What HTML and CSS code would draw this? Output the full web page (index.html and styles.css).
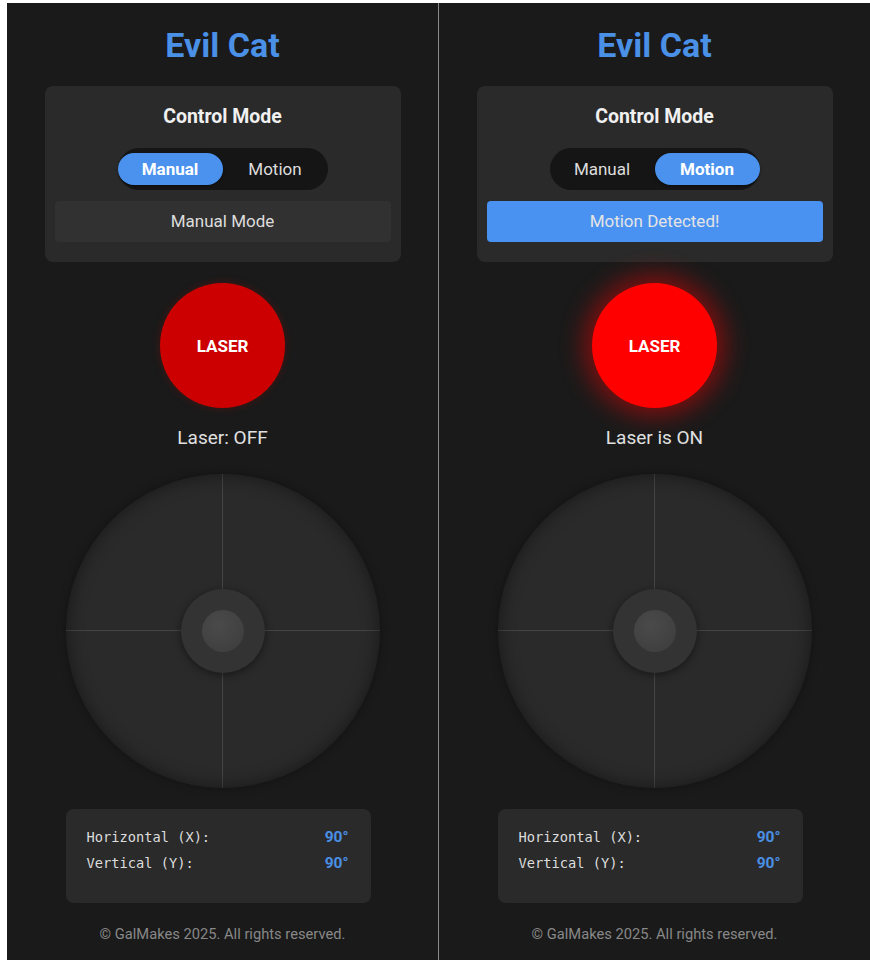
FILE: index.html
```html
<!DOCTYPE html>
<html lang="en">
<head>
  <meta charset="UTF-8">
  <meta name="viewport" content="width=device-width, initial-scale=1">
  <title>Evil Cat</title>
  <link rel="stylesheet" href="styles.css">
</head>
<body>
  <div class="frames">

    <!-- Manual mode, laser off -->
    <div class="panel">
      <h1 class="title">Evil Cat</h1>

      <div class="card">
        <h2 class="card-title">Control Mode</h2>
        <div class="toggle">
          <button class="toggle-btn active">Manual</button>
          <button class="toggle-btn">Motion</button>
        </div>
        <div class="status">Manual Mode</div>
      </div>

      <button class="laser">LASER</button>
      <p class="laser-state">Laser: OFF</p>

      <div class="joystick">
        <div class="knob"><div class="knob-cap"></div></div>
      </div>

      <div class="readout">
        <div class="readout-row"><span class="readout-label">Horizontal (X):</span><span class="readout-value">90°</span></div>
        <div class="readout-row"><span class="readout-label">Vertical (Y):</span><span class="readout-value">90°</span></div>
      </div>

      <footer class="footer">© GalMakes 2025. All rights reserved.</footer>
    </div>

    <div class="divider"></div>

    <!-- Motion mode, laser on -->
    <div class="panel">
      <h1 class="title">Evil Cat</h1>

      <div class="card">
        <h2 class="card-title">Control Mode</h2>
        <div class="toggle">
          <button class="toggle-btn">Manual</button>
          <button class="toggle-btn active">Motion</button>
        </div>
        <div class="status detected">Motion Detected!</div>
      </div>

      <button class="laser on">LASER</button>
      <p class="laser-state">Laser is ON</p>

      <div class="joystick">
        <div class="knob"><div class="knob-cap"></div></div>
      </div>

      <div class="readout">
        <div class="readout-row"><span class="readout-label">Horizontal (X):</span><span class="readout-value">90°</span></div>
        <div class="readout-row"><span class="readout-label">Vertical (Y):</span><span class="readout-value">90°</span></div>
      </div>

      <footer class="footer">© GalMakes 2025. All rights reserved.</footer>
    </div>

  </div>
</body>
</html>
```

FILE: styles.css
```css
html, body {
  margin: 0;
  background: #ffffff;
}
body {
  font-family: Roboto, "Noto Sans", Arial, sans-serif;
}
.frames {
  display: flex;
  padding: 3px 0 0 7px;
  height: 957px;
}
.panel {
  width: 431px;
  background: #1a1a1a;
  display: flex;
  flex-direction: column;
  align-items: center;
  overflow: hidden;
}
.divider {
  width: 1px;
  background: #8a8a8a;
}
.title {
  margin: 23px 0 0;
  font-size: 34px;
  line-height: 38px;
  font-weight: 700;
  color: #4a90e6;
}
.card {
  margin-top: 22px;
  width: 356px;
  box-sizing: border-box;
  padding: 20px 10px;
  background: #2a2a2a;
  border-radius: 8px;
  display: flex;
  flex-direction: column;
  align-items: center;
}
.card-title {
  margin: 0 0 20px;
  font-size: 19.5px;
  line-height: 22px;
  font-weight: 700;
  color: #f0f0f0;
}
.toggle {
  display: flex;
  padding: 5px 0;
  background: #151515;
  border-radius: 21px;
}
.toggle-btn {
  width: 105px;
  height: 32px;
  border: none;
  border-radius: 16px;
  background: transparent;
  color: #dddddd;
  font-family: inherit;
  font-size: 17px;
  padding: 0;
}
.toggle-btn.active {
  background: #4a92ee;
  color: #ffffff;
  font-weight: 700;
  box-shadow: 0 1px 3px rgba(0, 0, 0, 0.4);
}
.status {
  margin-top: 11px;
  align-self: stretch;
  height: 41px;
  line-height: 41px;
  text-align: center;
  background: #313131;
  border-radius: 4px;
  color: #dddddd;
  font-size: 17px;
}
.status.detected {
  background: #4a92f2;
  color: #e4e4e4;
}
.laser {
  margin-top: 21px;
  width: 125px;
  height: 125px;
  border: none;
  border-radius: 50%;
  background: #cc0000;
  color: #ffffff;
  font-family: inherit;
  font-size: 17px;
  font-weight: 700;
  box-shadow: 0 0 8px rgba(204, 0, 0, 0.25);
}
.laser.on {
  background: #ff0000;
  box-shadow: 0 0 25px 8px rgba(255, 0, 0, 0.45);
}
.laser-state {
  margin: 19px 0 0;
  font-size: 19px;
  line-height: 22px;
  color: #e0e0e0;
}
.joystick {
  margin-top: 25px;
  width: 314px;
  height: 314px;
  border-radius: 50%;
  background-color: #2a2a2a;
  background-image:
    linear-gradient(to right, transparent 156px, #444444 156px, #444444 157px, transparent 157px),
    linear-gradient(to bottom, transparent 156px, #444444 156px, #444444 157px, transparent 157px);
  box-shadow: inset 0 0 18px rgba(0, 0, 0, 0.45), 0 0 8px rgba(0, 0, 0, 0.35);
  display: flex;
  align-items: center;
  justify-content: center;
}
.knob {
  width: 84px;
  height: 84px;
  border-radius: 50%;
  background: #333333;
  box-shadow: 0 2px 8px rgba(0, 0, 0, 0.45);
  display: flex;
  align-items: center;
  justify-content: center;
}
.knob-cap {
  width: 42px;
  height: 42px;
  border-radius: 50%;
  background: radial-gradient(circle at 40% 35%, #4a4a4a, #3c3c3c);
}
.readout {
  margin: 21px 9px 0 0;
  width: 305px;
  box-sizing: border-box;
  padding: 15px 22px 27px 21px;
  background: #2a2a2a;
  border-radius: 8px;
}
.readout-row {
  display: flex;
  justify-content: space-between;
  align-items: center;
  height: 26px;
}
.readout-label {
  font-family: "DejaVu Sans Mono", "Liberation Mono", monospace;
  font-size: 13.7px;
  color: #dddddd;
}
.readout-value {
  font-size: 15.5px;
  font-weight: 700;
  color: #4a90e6;
}
.footer {
  margin-top: 22px;
  font-size: 14.7px;
  line-height: 18px;
  color: #888888;
}
```
